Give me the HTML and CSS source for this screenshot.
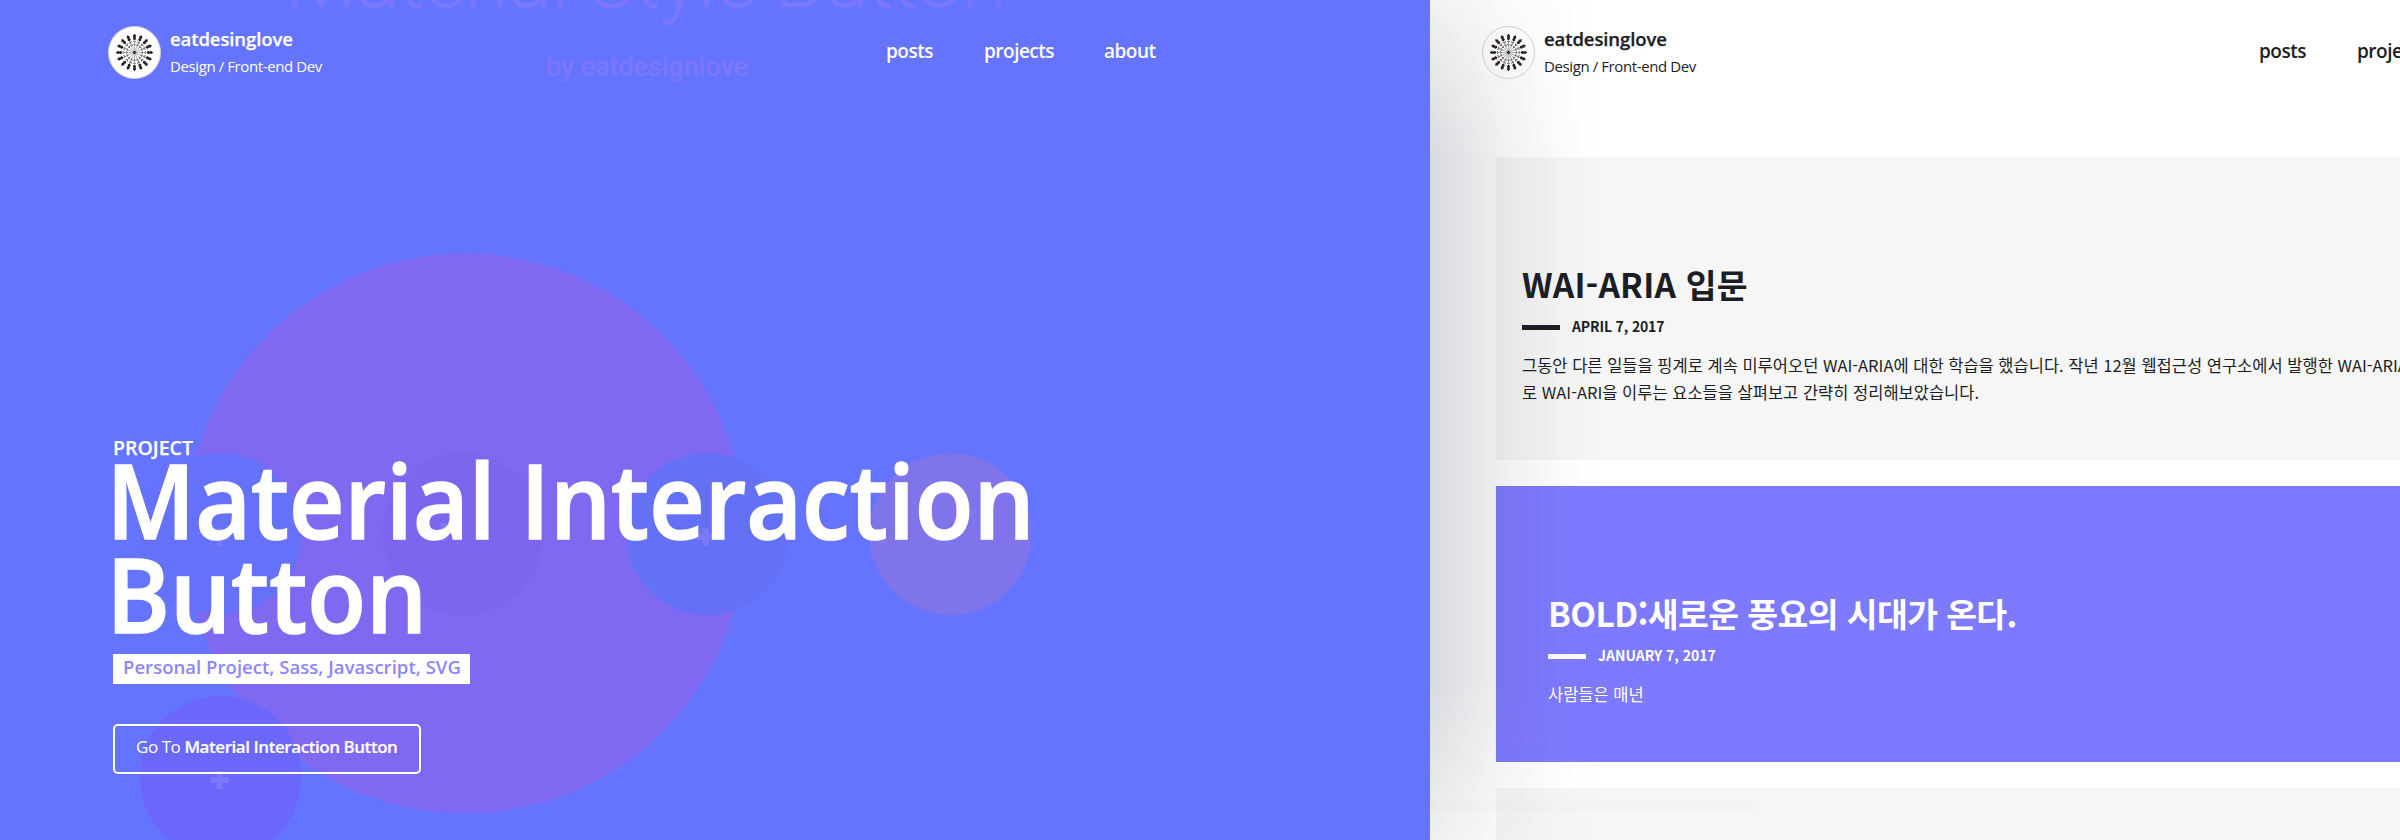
FILE: index.html
```
<!DOCTYPE html>
<html lang="ko">
<head>
<meta charset="utf-8">
<title>eatdesinglove</title>
<link rel="stylesheet" href="styles.css">
</head>
<body>
<svg class="defs" aria-hidden="true">
  <defs>
    <g id="stalk">
      <path d="M0 -3V-17" stroke="#777" stroke-width=".5"/>
      <path d="M-1 -8.500L0 -7L1 -8.500M-1.400 -11.500L0 -10L1.400 -11.500" fill="none" stroke="#4a4044" stroke-width=".7"/>
      <path d="M0 -18.800L1.600 -16.800L1.100 -14.800L1.700 -13.500L0 -12.200L-1.700 -13.500L-1.100 -14.800L-1.600 -16.800Z" fill="#2a2024"/>
    </g>
    <symbol id="logo" viewBox="-26.5 -26.5 53 53">
      <circle class="logo-disc" r="26"/>
      <use href="#stalk"/><use href="#stalk" transform="rotate(22.5)"/>
      <use href="#stalk" transform="rotate(45)"/><use href="#stalk" transform="rotate(67.5)"/>
      <use href="#stalk" transform="rotate(90)"/><use href="#stalk" transform="rotate(112.5)"/>
      <use href="#stalk" transform="rotate(135)"/><use href="#stalk" transform="rotate(157.5)"/>
      <use href="#stalk" transform="rotate(180)"/><use href="#stalk" transform="rotate(202.5)"/>
      <use href="#stalk" transform="rotate(225)"/><use href="#stalk" transform="rotate(247.5)"/>
      <use href="#stalk" transform="rotate(270)"/><use href="#stalk" transform="rotate(292.5)"/>
      <use href="#stalk" transform="rotate(315)"/><use href="#stalk" transform="rotate(337.5)"/>
      <circle r="3" fill="#bbb"/><circle r="1.4" fill="#222"/>
    </symbol>
  </defs>
</svg>
<div class="page">
  <section class="hero">
    <svg class="art" viewBox="0 0 1430 840" aria-hidden="true">
      <circle cx="465" cy="533.5" r="280" fill="#7f69f0"/>
      <circle cx="220.500" cy="534" r="81" fill="#6471f8"/>
      <circle cx="463" cy="534" r="81" fill="#7c66ed"/>
      <circle cx="707" cy="534" r="81" fill="#6470f6"/>
      <circle cx="950.500" cy="534" r="81" fill="#7f74ea"/>
      <circle cx="220.500" cy="777" r="81" fill="#6c67fb"/>
      <g fill="#7d79ff">
        <path d="M216.500 528h6v6h6v6h-6v6h-6v-6h-6v-6h6z"/>
        <path d="M441 523h6v6h6v6h-6v6h-6v-6h-6v-6h6z"/>
        <path d="M703 528h6v6h6v6h-6v6h-6v-6h-6v-6h6z"/>
        <path d="M947 528h6v6h6v6h-6v6h-6v-6h-6v-6h6z"/>
        <path d="M216.500 771h6v6h6v6h-6v6h-6v-6h-6v-6h6z"/>
      </g>
      <text class="ghost-title" x="285" y="7" textLength="722">Material Style Button</text>
      <text class="ghost-by" x="546" y="76" textLength="202">by eatdesignlove</text>
    </svg>
    <header class="bar">
      <svg class="logo"><use href="#logo"/></svg>
      <div class="who"><strong class="name">eatdesinglove</strong><span class="role">Design / Front-end Dev</span></div>
      <nav class="nav"><a class="posts">posts</a><a class="projects">projects</a><a>about</a></nav>
    </header>
    <div class="intro">
      <p class="kicker">PROJECT</p>
      <h1 class="headline">Material Interaction<br>Button</h1>
      <p class="tags">Personal Project, Sass, Javascript, SVG</p>
      <a class="go"><span class="light">Go To</span> Material Interaction Button</a>
    </div>
  </section>
  <section class="blog">
    <header class="bar">
      <svg class="logo logo-line"><use href="#logo"/></svg>
      <div class="who"><strong class="name">eatdesinglove</strong><span class="role">Design / Front-end Dev</span></div>
      <nav class="nav"><a class="posts">posts</a><a class="projects">projects</a></nav>
    </header>
    <main class="list">
      <article class="card first">
        <h2 class="title title-a">WAI-ARIA 입문</h2>
        <p class="date date-a">APRIL 7, 2017</p>
        <p class="text">그동안 다른 일들을 핑계로 계속 미루어오던 WAI-ARIA에 대한 학습을 했습니다. 작년 12월 웹접근성 연구소에서 발행한 WAI-ARIA<br>로 WAI-ARI을 이루는 요소들을 살펴보고 간략히 정리해보았습니다.</p>
      </article>
      <article class="card second">
        <h2 class="title title-b">BOLD:새로운 풍요의 시대가 온다.</h2>
        <p class="date date-b">JANUARY 7, 2017</p>
        <p class="text">사람들은 매년</p>
      </article>
      <article class="card third"></article>
    </main>
    <div class="shade"></div>
    <div class="foot-shade"></div>
  </section>
</div>
</body>
</html>
```
FILE: styles.css
```
* { box-sizing: border-box; }
body { margin: 0; overflow: hidden; font-family: "Noto Sans CJK KR", "Noto Sans", sans-serif; }
p, h1, h2 { margin: 0; }
.defs { position: absolute; width: 0; height: 0; }
.page { display: flex; width: 2400px; height: 840px; overflow: hidden; }

.hero { position: relative; flex: none; width: 1430px; height: 840px; background: #6574ff; color: #fff; }
.art { position: absolute; inset: 0; width: 1430px; height: 840px; }
.ghost-title { font: 300 83px Roboto, sans-serif; fill: #7b78ff; }
.ghost-by { font: 500 27px Roboto, sans-serif; fill: #7b78ff; }

.bar, .intro { font-family: "Open Sans", "Noto Sans", sans-serif; }
.bar { position: relative; display: flex; height: 157px; padding: 26px 0 0 108px; }
.logo { flex: none; width: 53px; height: 53px; }
.logo-disc { fill: #fff; stroke: #d5d5d2; stroke-width: 1; }
.logo-line .logo-disc { fill: none; }
.who { display: flex; flex: none; flex-direction: column; width: 725px; padding-left: 9px; white-space: nowrap; }
.name { margin-top: 1px; font-size: 18.5px; line-height: 24px; font-weight: 600; letter-spacing: -.1px; -webkit-text-stroke: .25px currentColor; }
.role { margin-top: 3px; font-size: 15px; line-height: 24px; letter-spacing: -.4px; }
.nav { display: flex; padding-top: 13px; font-size: 19px; line-height: 24px; font-weight: 600; white-space: nowrap; letter-spacing: -.5px; }
.posts { width: 98px; flex: none; }
.projects { width: 120px; flex: none; }

.intro { position: relative; padding: 279px 0 0 113px; white-space: nowrap; }
.kicker { font-size: 19.5px; line-height: 24px; font-weight: 600; -webkit-text-stroke: .25px currentColor; }
.headline { width: 1000px; margin: -8px 0 0 -7px; font-size: 103.5px; line-height: 94px; font-weight: 600; -webkit-text-stroke: 1.6px #fff; transform: scaleX(.93); transform-origin: 7px 0; }
.tags { width: 357px; height: 30px; margin-top: 14px; padding-left: 10px; background: #fff; color: #8d86fb; font-size: 18.5px; line-height: 26px; font-weight: 600; letter-spacing: .04px; }
.go { display: block; width: 308px; height: 50px; margin-top: 40px; padding-left: 21px; border: 2px solid #fff; border-radius: 5px; font-size: 17px; line-height: 42px; font-weight: 600; letter-spacing: -.44px; -webkit-text-stroke: .2px currentColor; }
.light { font-weight: 400; -webkit-text-stroke: 0; }

.blog { position: relative; flex: none; width: 970px; height: 840px; overflow: hidden; background: #fff; color: #1b1e24; }
.blog .bar { padding-left: 52px; }
.blog .who { width: 724px; }
.list { display: flex; flex-direction: column; gap: 26px; padding-left: 66px; }
.card { flex: none; overflow: hidden; white-space: nowrap; background: #f6f6f6; }
.first { height: 303px; padding: 105px 0 0 26px; }
.second { height: 276px; padding: 105px 0 0 52px; background: #7e7aff; color: #fff; }
.third { height: 60px; }
.title { font-size: 33.5px; line-height: 44px; font-weight: 600; }
.title-a { letter-spacing: .2px; }
.title-b { letter-spacing: -.6px; }
.date { display: flex; align-items: center; gap: 12px; margin-top: 9px; font-size: 14px; line-height: 22px; font-weight: 600; }
.date::before { content: ""; width: 38px; height: 5px; margin-top: 3px; background: currentColor; }
.date-a { letter-spacing: -.15px; }
.text { margin-top: 15px; font-size: 16.5px; line-height: 26.5px; }
.shade { position: absolute; left: 0; top: 0; width: 170px; height: 840px; background: linear-gradient(90deg, rgba(40,44,66,.18), rgba(40,44,66,.075) 42%, rgba(40,44,66,.02) 78%, transparent); -webkit-mask-image: linear-gradient(180deg, rgba(0,0,0,.35), #000 160px, #000 680px, rgba(0,0,0,.4)); mask-image: linear-gradient(180deg, rgba(0,0,0,.35), #000 160px, #000 680px, rgba(0,0,0,.4)); }
.foot-shade { position: absolute; left: 0; top: 796px; width: 325px; height: 14px; background: linear-gradient(180deg, transparent, rgba(0,0,0,.014)); }
```
